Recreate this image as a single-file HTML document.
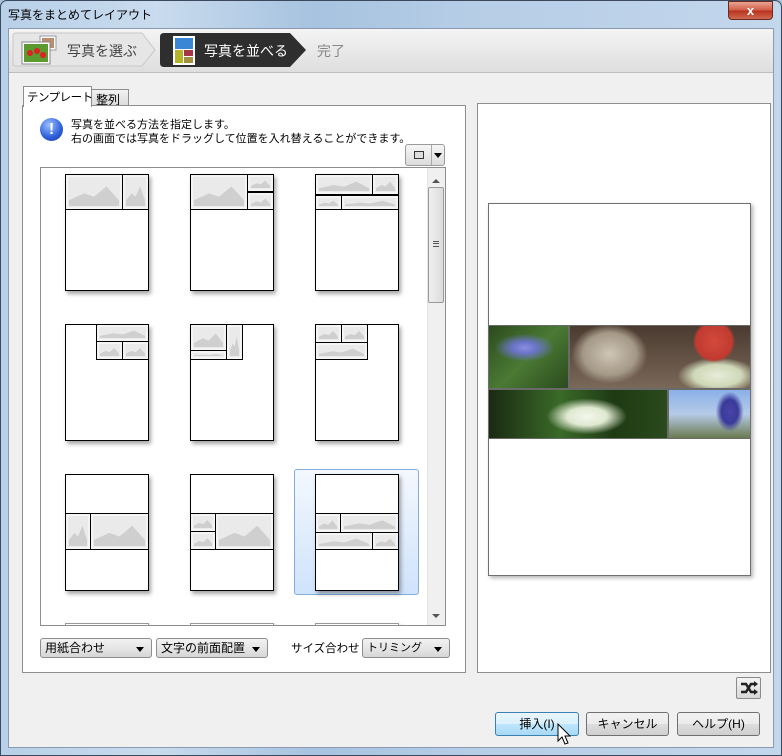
<!DOCTYPE html>
<html><head><meta charset="utf-8"><style>
*{box-sizing:border-box;margin:0;padding:0;white-space:nowrap}
body{width:782px;height:756px;overflow:hidden;font-family:"Liberation Sans","Noto Sans CJK JP",sans-serif;font-size:12px;color:#000;position:relative;background:#a9c4df}
.a{position:absolute}
.frame{left:0;top:0;width:782px;height:756px;border:1px solid #3a4a5c;border-radius:7px 7px 0 0;background:linear-gradient(90deg,#b8d0e8 0%,#c9dbee 20%,#a7c3df 40%,#b6cde6 60%,#c3d7ec 100%)}
.client{left:8px;top:28px;width:766px;height:720px;background:#f0f0f0;border:1px solid #8a9bb0}
.thumb{position:absolute;width:84px;height:117px;background:#fff;border:1.5px solid #000;box-shadow:2px 3px 4px rgba(0,0,0,.35)}
.c{position:absolute;background:#eaeaea;outline:1.5px solid #000;border:2px solid #f4f4f4}
.c::after{content:"";position:absolute;left:1px;right:1px;bottom:1px;top:20%;background:#cfcfcf;clip-path:polygon(0 100%,0 75%,30% 45%,50% 60%,75% 15%,100% 75%,100% 100%)}
.dd{position:absolute;height:20px;border:1px solid #8e8e8e;border-radius:3px;background:linear-gradient(#f2f2f2,#e6e6e6 50%,#d6d6d6);padding:1px 4px;font-size:12px;line-height:16px}
.dd::after{content:"";position:absolute;right:7px;top:8px;border:4px solid transparent;border-top:5px solid #000}
.btn{position:absolute;height:24px;border:1px solid #707070;border-radius:3px;background:linear-gradient(#f2f2f2,#ebebeb 50%,#dddddd 51%,#cfcfcf);text-align:center;line-height:22px;font-size:12px}
</style></head><body>
<div class="a frame"></div>
<div class="a" style="left:8px;top:6px;font-size:12px">写真をまとめてレイアウト</div>
<div class="a" style="left:728px;top:1px;width:45px;height:19px;border:1px solid #6a2a20;border-radius:0 0 4px 4px;background:linear-gradient(#e9a594,#cf5a43 50%,#b8301c 51%,#d06a52);color:#fff;font-weight:bold;text-align:center;line-height:17px;font-size:13px">x</div>
<div class="a client"></div>
<div class="a" style="left:9px;top:29px;width:764px;height:44px;background:linear-gradient(#f4f4f4,#dedede);border-bottom:1px solid #bdbdbd"></div>
<svg class="a" style="left:12px;top:32px" width="300" height="38">
<path d="M4 1 H130 L143 18 L130 34 H4 Q1 34 1 31 V4 Q1 1 4 1Z" fill="#e6e6e6" stroke="#c8c8c8"/>
<path d="M152 1 H278 L294 18 L278 35 H152 Q148 35 148 31 V5 Q148 1 152 1Z" fill="#2e2e2e"/>
<rect x="28" y="4" width="16" height="14" fill="#fff" stroke="#999"/><rect x="30" y="6" width="12" height="10" fill="#b98d70"/>
<rect x="10" y="10" width="28" height="22" fill="#fff" stroke="#888"/><rect x="12" y="12" width="24" height="18" fill="#5b9a2e"/>
<circle cx="18" cy="21" r="3" fill="#d22"/><circle cx="25" cy="19" r="3" fill="#d22"/><circle cx="31" cy="23" r="3" fill="#d22"/>
<rect x="161" y="4" width="22" height="29" fill="#fff"/><rect x="163" y="6" width="18" height="11" fill="#3a86d4"/><rect x="163" y="18" width="8" height="13" fill="#b6b42a"/><rect x="172" y="18" width="9" height="6" fill="#a8344a"/><rect x="172" y="25" width="9" height="6" fill="#a09040"/>
</svg>
<div class="a" style="left:67px;top:41px;font-size:14px;color:#444">写真を選ぶ</div>
<div class="a" style="left:204px;top:41px;font-size:14px;color:#fff">写真を並べる</div>
<div class="a" style="left:317px;top:41px;font-size:14px;color:#888">完了</div>
<div class="a" style="left:23px;top:86px;width:69px;height:21px;background:#fff;border:1px solid #8e8e8e;border-bottom:none;z-index:2;padding:2px 3px;font-size:11.5px;letter-spacing:-0.5px">テンプレート</div>
<div class="a" style="left:91px;top:89px;width:38px;height:17px;background:linear-gradient(#f2f2f2,#dcdcdc);border:1px solid #8e8e8e;padding:1px 4px;font-size:12px">整列</div>
<div class="a" style="left:22px;top:105px;width:444px;height:568px;background:#f5f5f5;border:1px solid #8e8e8e;z-index:1"></div>
<div class="a" style="left:23px;top:106px;width:442px;height:566px;background:#fff;z-index:1"></div>
<div class="a" style="z-index:3;left:0;top:0">
<div class="a" style="left:40px;top:118px;width:23px;height:23px;border-radius:50%;background:radial-gradient(circle at 40% 30%,#9cc0ff,#2d5ed8 60%,#1b3fa0);color:#fff;font-weight:bold;text-align:center;line-height:23px;font-size:16px">!</div>
<div class="a" style="left:71px;top:118px;line-height:14px;font-size:11px">写真を並べる方法を指定します。<br>右の画面では写真をドラッグして位置を入れ替えることができます。</div>
<div class="a" style="left:405px;top:144px;width:40px;height:22px;border:1px solid #9a9a9a;border-radius:3px;background:linear-gradient(#f6f6f6,#dcdcdc)"><div class="a" style="left:8px;top:6px;width:10px;height:8px;border:1px solid #333;background:#ddd"></div><div class="a" style="left:25px;top:0;width:1px;height:20px;background:#aaa"></div><div class="a" style="left:28px;top:8px;border:4px solid transparent;border-top:5px solid #000"></div></div>
<div class="a" style="left:40px;top:167px;width:406px;height:459px;border:1px solid #8e8e8e;background:#fff;overflow:hidden">
 <div class="a" style="left:253px;top:301px;width:125px;height:126px;border:1px solid #84acdd;border-radius:3px;background:linear-gradient(#f3f8fe,#cfe3fb)"></div>
 <div class="thumb" style="left:24px;top:6px"><div class="c" style="left:0;top:0;width:56px;height:34px"></div><div class="c" style="left:57px;top:0;width:25px;height:34px"></div></div>
 <div class="thumb" style="left:149px;top:6px"><div class="c" style="left:0;top:0;width:56px;height:34px"></div><div class="c" style="left:57px;top:0;width:25px;height:16px"></div><div class="c" style="left:57px;top:18px;width:25px;height:16px"></div></div>
 <div class="thumb" style="left:274px;top:6px"><div class="c" style="left:0;top:0;width:56px;height:19px"></div><div class="c" style="left:57px;top:0;width:25px;height:19px"></div><div class="c" style="left:0;top:21px;width:25px;height:13px"></div><div class="c" style="left:26px;top:21px;width:56px;height:13px"></div></div>
 <div class="thumb" style="left:24px;top:156px"><div class="c" style="left:31px;top:0;width:51px;height:16px"></div><div class="c" style="left:31px;top:17px;width:25px;height:17px"></div><div class="c" style="left:57px;top:17px;width:25px;height:17px"></div></div>
 <div class="thumb" style="left:149px;top:156px"><div class="c" style="left:0;top:0;width:35px;height:25px"></div><div class="c" style="left:0;top:26px;width:35px;height:8px"></div><div class="c" style="left:36px;top:0;width:15px;height:34px"></div></div>
 <div class="thumb" style="left:274px;top:156px"><div class="c" style="left:0;top:0;width:25px;height:17px"></div><div class="c" style="left:26px;top:0;width:25px;height:17px"></div><div class="c" style="left:0;top:18px;width:51px;height:16px"></div></div>
 <div class="thumb" style="left:24px;top:306px"><div class="c" style="left:0;top:39px;width:24px;height:35px"></div><div class="c" style="left:25px;top:39px;width:57px;height:35px"></div></div>
 <div class="thumb" style="left:149px;top:306px"><div class="c" style="left:0;top:39px;width:24px;height:17px"></div><div class="c" style="left:0;top:57px;width:24px;height:17px"></div><div class="c" style="left:25px;top:39px;width:57px;height:35px"></div></div>
 <div class="thumb" style="left:274px;top:306px"><div class="c" style="left:0;top:39px;width:24px;height:18px"></div><div class="c" style="left:25px;top:39px;width:57px;height:18px"></div><div class="c" style="left:0;top:58px;width:56px;height:16px"></div><div class="c" style="left:57px;top:58px;width:25px;height:16px"></div></div>
 <div class="thumb" style="left:24px;top:455px;border-color:#999"></div><div class="thumb" style="left:149px;top:455px;border-color:#999"></div><div class="thumb" style="left:274px;top:455px;border-color:#999"></div>
 <div class="a" style="left:386px;top:0;width:18px;height:457px;background:#f0f0f0;border-left:1px solid #e4e4e4"></div>
 <div class="a" style="left:391px;top:7px;border:4px solid transparent;border-bottom:4px solid #555"></div>
 <div class="a" style="left:391px;top:446px;border:4px solid transparent;border-top:4px solid #555"></div>
 <div class="a" style="left:387px;top:19px;width:16px;height:116px;border:1px solid #9a9a9a;border-radius:2px;background:linear-gradient(90deg,#f0f0f0,#dcdcdc)"><div class="a" style="left:4px;top:53px;width:6px;height:6px;border-top:1px solid #555;border-bottom:1px solid #555"></div><div class="a" style="left:4px;top:55px;width:6px;height:1px;background:#555"></div></div>
</div>
<div class="dd" style="left:40px;top:638px;width:112px">用紙合わせ</div>
<div class="dd" style="left:156px;top:638px;width:112px">文字の前面配置</div>
<div class="a" style="left:291px;top:640px;font-size:11.5px">サイズ合わせ</div>
<div class="dd" style="left:362px;top:638px;width:88px;font-size:11px">トリミング</div>
</div>
<div class="a" style="left:477px;top:103px;width:294px;height:570px;background:#fff;border:1px solid #8e8e8e"></div>
<div class="a" style="left:488px;top:203px;width:263px;height:373px;background:#fff;border:1px solid #707070;box-shadow:2px 2px 4px rgba(0,0,0,.3)"></div>
<div class="a" style="left:489px;top:325px;width:261px;height:114px;background:#6a6a6a"></div>
<div class="a" style="left:489px;top:326px;width:79px;height:62px;background:radial-gradient(ellipse 30px 14px at 45% 35%,#8a8ee0 0,#6a74c8 40%,transparent 100%),linear-gradient(135deg,#2c4a1e,#4a7a34 50%,#2c4a1e)"></div>
<div class="a" style="left:570px;top:326px;width:180px;height:62px;background:radial-gradient(ellipse 38px 30px at 22% 45%,#cfc6b6 0,#a49886 70%,transparent 100%),radial-gradient(circle at 80% 25%,#d44a3c 0,#c03a30 12%,transparent 14%),radial-gradient(ellipse 40px 18px at 82% 80%,#e8ecd8 0,#cfd8b8 60%,transparent 100%),linear-gradient(#4a3a30,#7a6858)"></div>
<div class="a" style="left:489px;top:390px;width:178px;height:48px;background:radial-gradient(ellipse 40px 18px at 55% 55%,#f4f8ee 0,#dfe8d0 50%,transparent 100%),linear-gradient(90deg,#1a2a12,#3a6a28 40%,#1e3a14 70%,#2a4a1c)"></div>
<div class="a" style="left:669px;top:390px;width:81px;height:48px;background:radial-gradient(ellipse 14px 20px at 75% 45%,#4a44a8 0,#3a3a9a 60%,transparent 100%),linear-gradient(#8ab0e8,#b6cbe8 50%,#6a7a50)"></div>
<div class="a" style="left:736px;top:677px;width:25px;height:22px;border:1px solid #8a8a8a;border-radius:2px;background:linear-gradient(#f4f4f4,#d8d8d8)"><svg width="23" height="20"><path d="M4 6 H9 L14 14 H18 M4 14 H9 L14 6 H18" stroke="#222" stroke-width="2.5" fill="none"/><path d="M17 3 L21 6 L17 9Z M17 11 L21 14 L17 17Z" fill="#222"/></svg></div>
<div class="btn" style="left:495px;top:712px;width:84px;border-color:#3c7fb1;background:linear-gradient(#eaf6fd,#d9f0fc 50%,#bee6fd 51%,#a7d9f5)">挿入(I)</div>
<div class="btn" style="left:586px;top:712px;width:83px">キャンセル</div>
<div class="btn" style="left:677px;top:712px;width:83px">ヘルプ(H)</div>
<svg class="a" style="left:557px;top:723px" width="16" height="24"><path d="M1 1 V18 L5 14 L8 21 L11 20 L8 13 H13Z" fill="#fff" stroke="#000"/></svg>
</body></html>
